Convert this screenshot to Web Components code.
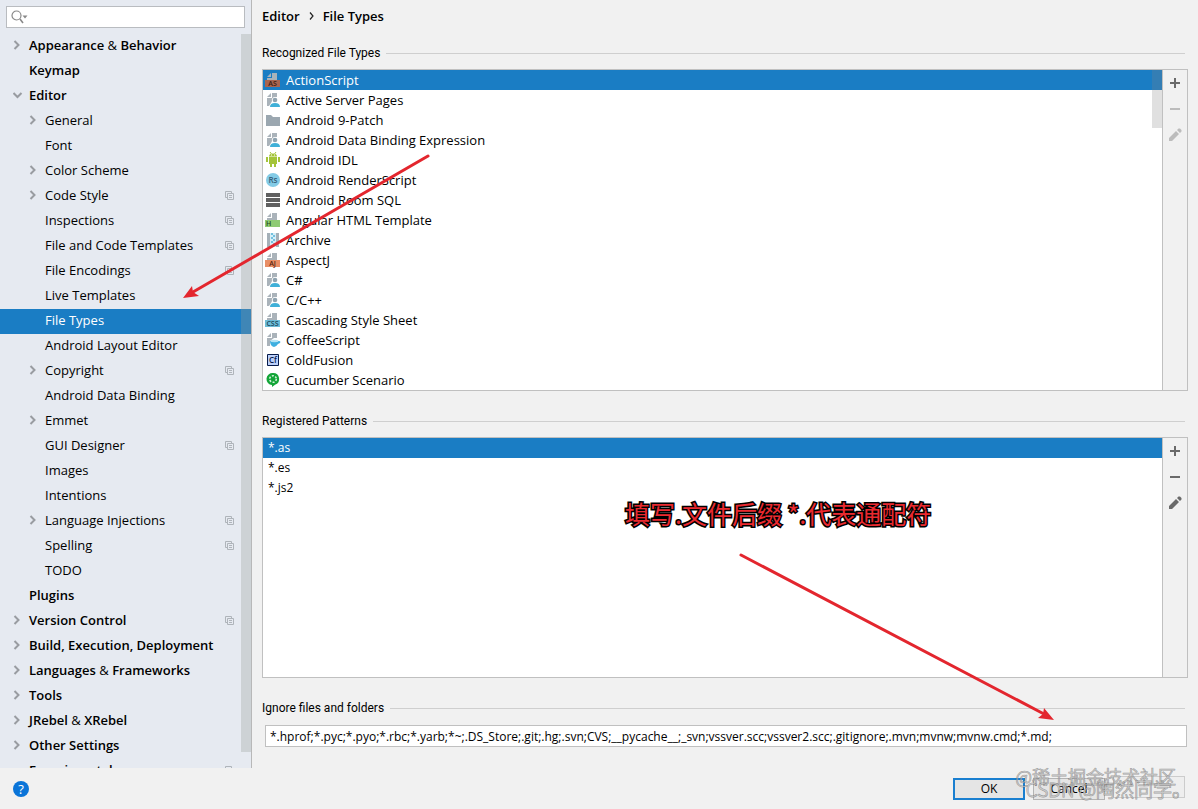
<!DOCTYPE html>
<html lang="en">
<head>
<meta charset="utf-8">
<title>Settings</title>
<style>
html,body{margin:0;height:100%}
body{font:13px/20px "Open Sans","Noto Sans","Noto Sans CJK SC",sans-serif;color:#000;background:#f1f1f1;overflow:hidden}
</style>
</head>
<body>
<settings-app></settings-app>
<script>
const define = (name, html, setup) => customElements.define(name, class extends HTMLElement {
  connectedCallback() {
    if (this.shadowRoot) return;
    const t = document.createElement('template');
    t.innerHTML = html;
    this.attachShadow({mode: 'open'}).append(t.content.cloneNode(true));
    if (setup) setup(this, this.shadowRoot);
  }
});

/* ---------- file type icons ---------- */
const page = '<path d="M7 1h5v7H2V6h5zM6 1v4H2z" fill="#aab3ba"/>';
const tag = (fill, text, ink, anchor) => page +
  `<rect x="0" y="8" width="15" height="7" fill="${fill}"/><text x="${anchor ? 7.5 : 1}" y="14" ${anchor ? 'text-anchor="middle"' : ''} font-family="Open Sans,sans-serif" font-size="7" font-weight="600" fill="${ink}">${text}</text>`;
const user = '<path d="M7 1h5v4h-2a3 3 0 0 0-3 4l-1 2-2 3H2V6h5zM6 1v4H2z" fill="#aab3ba"/><circle cx="10" cy="8" r="2.300" fill="#8fa3b0"/><path d="M5 15q0-4 5-4t5 4z" fill="#40b0d8"/>';
const icons = {
  as: tag('#a8644f', 'AS', '#3a1a10', true),
  user,
  folder: '<path d="M1 3h5l2 2h7v9H1z" fill="#9ba7b0"/>',
  android: '<path d="M4 5h8v7H4z M5 12h2v3H5z M9 12h2v3H9z M1 5h2v5H1z M13 5h2v5h-2z M4 4.500Q4 1.500 8 1.500T12 4.500z" fill="#a4c439"/><path d="M5 0l1.500 2M11 0L9.500 2" stroke="#a4c439"/><path d="M6 3h1M9 3h1" stroke="#fff"/>',
  rs: '<circle cx="8" cy="8" r="7" fill="#83cbe6"/><text x="8" y="11" text-anchor="middle" font-family="Open Sans,sans-serif" font-size="8" font-weight="600" fill="#37607a">Rs</text>',
  sql: '<path d="M1 1h14v4H1zM1 6h14v4H1zM1 11h14v4H1z" fill="#606060"/>',
  html: tag('#8ecb74', 'H', '#24451a'),
  archive: '<path d="M2 1h3v14H2zM11 1h3v14h-3z" fill="#a5b0b8"/><path d="M5 1h6v14H5z" fill="#d5eef8"/><path d="M6 2h2M8 4h2M6 6h2M8 8h2M6 10h2M8 12h2M6 14h2" stroke="#53b2d6" stroke-width="1.500"/>',
  aj: tag('#e88e66', 'AJ', '#56220c', true),
  css: tag('#6dbcd8', 'CSS', '#194456', true),
  coffee: '<path d="M7 1h5v5H9l-4 3v5H2V6h5zM6 1v4H2z" fill="#aab3ba"/><path d="M5 9h9q2 0 1 2l-2 1q-2 3-4 3-4-1-4-6z" fill="#3eafe0"/><ellipse cx="9.500" cy="9" rx="4" ry="1.200" fill="#b5e3f4"/>',
  cf: '<path d="M2.500 2.500h11v11h-11z" fill="#bcd0fa" stroke="#071b4b"/><text x="8" y="11" text-anchor="middle" font-family="Open Sans,sans-serif" font-size="8" font-weight="600" fill="#071b4b">Cf</text>',
  cucumber: '<path d="M8 1a6 6 0 0 1 2 11.700L7 15v-2A6 6 0 0 1 8 1z" fill="#13a538"/><circle cx="8" cy="7" r="3.300" fill="none" stroke="#d2f2d9" stroke-width="1.600" stroke-dasharray="2 1.500"/>'
};

/* ---------- tree row ---------- */
define('tree-item', `<style>
:host{display:flex;align-items:center;box-sizing:border-box;height:25px;flex:none;padding:0 17px 3px 13px;font-size:13px;white-space:nowrap}
:host([level="2"]){padding-left:29px}
:host([level="1"]){font-weight:600}
:host([selected]){background:#1a7dc4;color:#fff}
.chev{width:16px;height:10px;flex:none}
.chev svg{display:block}
.label{flex:1}
path{fill:none;stroke:#999ca1;stroke-width:2}
.copy path{stroke:#afb4ba;stroke-width:1}
</style><span class="chev"></span><span class="label"><slot></slot></span><span class="copy"></span>`, (el, root) => {
  el.setAttribute('role', 'treeitem');
  const kind = el.getAttribute('chevron');
  if (kind) root.querySelector('.chev').innerHTML = `<svg width="10" height="10"><path d="${kind === 'open' ? 'M0.500 3L4.500 7L8.500 3' : 'M1.500 1L5.500 5L1.500 9'}"/></svg>`;
  if (el.hasAttribute('copy')) root.querySelector('.copy').innerHTML = '<svg width="9" height="9" style="display:block"><path d="M2.500 6.500h-2v-6h6v2M2.500 2.500h6v6h-6zM4 4.500h3M4 6.500h3"/></svg>';
});

/* ---------- sidebar ---------- */
const rows = [
  ['1', 'closed', 'Appearance <i>&amp;</i> Behavior'], ['1', '', 'Keymap'], ['1', 'open', 'Editor'],
  ['2', 'closed', 'General'], ['2', '', 'Font'], ['2', 'closed', 'Color Scheme'],
  ['2', 'closed', 'Code Style', 'copy'], ['2', '', 'Inspections', 'copy'],
  ['2', '', 'File and Code Templates', 'copy'], ['2', '', 'File Encodings', 'copy'],
  ['2', '', 'Live Templates'], ['2', '', 'File Types', 'selected'], ['2', '', 'Android Layout Editor'],
  ['2', 'closed', 'Copyright', 'copy'], ['2', '', 'Android Data Binding'], ['2', 'closed', 'Emmet'],
  ['2', '', 'GUI Designer', 'copy'], ['2', '', 'Images'], ['2', '', 'Intentions'],
  ['2', 'closed', 'Language Injections', 'copy'], ['2', '', 'Spelling', 'copy'], ['2', '', 'TODO'],
  ['1', '', 'Plugins'], ['1', 'closed', 'Version Control', 'copy'],
  ['1', 'closed', 'Build, Execution, Deployment'], ['1', 'closed', 'Languages <i>&amp;</i> Frameworks'],
  ['1', 'closed', 'Tools'], ['1', 'closed', 'JRebel <i>&amp;</i> XRebel'], ['1', 'closed', 'Other Settings'],
  ['1', '', 'Experimental', 'copy']
];
define('settings-sidebar', `<style>
:host{display:flex;flex-direction:column;position:relative;background:#e6eaf1;border-right:1px solid #b8b8b8;overflow:hidden;min-height:0}
.search{display:flex;align-items:center;flex:none;height:20px;margin:6px;border:1px solid #b9bcc0;background:#fff}
.search svg{flex:none;margin-left:4px}
input{flex:1;min-width:0;border:0;outline:0;padding:0 4px;background:none;font:inherit}
.tree{display:flex;flex-direction:column;flex:1;min-height:0;overflow:hidden}
i{font-style:normal;font-weight:400}
.bar{position:absolute;right:0;top:34px;bottom:16px;width:10px;background:rgba(150,155,150,.3)}
</style>
<label class="search"><svg width="17" height="14" aria-hidden="true"><circle cx="5.500" cy="5.500" r="4.500" fill="none" stroke="#888" stroke-width="1.200"/><path d="M9 9l3 4" stroke="#888" stroke-width="1.500"/><path d="M11.500 5.500h5l-2.500 3z" fill="#888"/></svg><input type="text" aria-label="Search settings"></label>
<div class="tree" role="tree">${rows.map(([l, c, t, f]) => `<tree-item level="${l}"${c ? ` chevron="${c}"` : ''} ${f || ''}>${t}</tree-item>`).join('')}</div>
<div class="bar"></div>`);

/* ---------- section heading with rule ---------- */
define('section-title', `<style>
:host{display:flex;align-items:center;gap:6px;height:20px;flex:none;font-family:Roboto,sans-serif;font-size:12px;margin-right:3px}
hr{flex:1;border:0;border-top:1px solid #cfcfcf;margin:0}
</style><slot></slot><hr>`);

/* ---------- list row ---------- */
define('list-row', `<style>
:host{display:flex;align-items:center;height:20px;gap:5px;padding-left:2px;white-space:nowrap}
:host([plain]){padding-left:5px;font-size:12px;line-height:22px}
:host([selected]){background:#1a7dc4;color:#fff}
svg{flex:none}
</style><span><slot></slot></span>`, (el, root) => {
  el.setAttribute('role', 'option');
  const icon = icons[el.getAttribute('icon')];
  if (icon) root.querySelector('span').insertAdjacentHTML('beforebegin', `<svg width="16" height="16" aria-hidden="true">${icon}</svg>`);
});

/* ---------- toolbar button ---------- */
const glyphs = {
  Add: '<path d="M7 2v10M2 7h10" stroke="currentColor" stroke-width="2"/>',
  Remove: '<path d="M2 7h10" stroke="currentColor" stroke-width="2"/>',
  Edit: '<path d="M1 13v-3L8 3l3 3-7 7zM9 2l1.500-1.500h1.500l1.500 1.500v1.500L12 5z" fill="currentColor"/>'
};
define('tool-button', `<style>
:host{display:block;color:#6a6a6a}
:host([off]){color:#bcbcbc}
button{display:flex;align-items:center;justify-content:center;width:100%;height:26px;padding:0;border:0;background:none;color:inherit}
</style><button type="button"></button>`, (el, root) => {
  const b = root.querySelector('button'), n = el.getAttribute('name');
  b.setAttribute('aria-label', n);
  b.disabled = el.hasAttribute('off');
  b.innerHTML = `<svg width="14" height="14">${glyphs[n]}</svg>`;
});

/* ---------- list with side toolbar ---------- */
define('list-panel', `<style>
:host{display:grid;grid-template-columns:1fr 24px;border:1px solid #c0c0c0;min-height:0}
.list{background:#fff;border-right:1px solid #c0c0c0;position:relative}
.thumb{display:none}
:host([scroll]) .thumb{display:block;position:absolute;right:0;top:0;width:10px;height:58px;background:rgba(130,130,130,.25)}
</style><div class="list" role="listbox"><slot></slot><div class="thumb"></div></div><div><slot name="tools"></slot></div>`);

/* ---------- dialog button ---------- */
define('dialog-button', `<style>
:host{display:block}
button{box-sizing:border-box;width:72px;height:22px;padding:0;border:1px solid #b4b4b4;background:#e5e5e5;font:inherit;font-size:12px;line-height:20px;color:#000}
:host([primary]) button{border:2px solid #1a7fd0;line-height:18px}
:host([off]) button{border-color:#cccccc;background:#eeeeee}
</style><button type="button"><slot></slot></button>`, (el, root) => {
  if (el.hasAttribute('off')) { const b = root.querySelector('button'); b.disabled = true; b.setAttribute('aria-label', 'Apply'); }
});

/* ---------- arrows, note and watermarks over the dialog ---------- */
define('page-notes', `<style>
:host{position:absolute;inset:0;pointer-events:none;overflow:hidden;white-space:nowrap;font-family:"Noto Sans CJK SC",sans-serif}
svg{position:absolute;left:0;top:0}
.note{position:absolute;left:625px;top:495px;font-size:25px;line-height:36px;font-weight:400;color:#ea2a30;-webkit-text-stroke:3px #000;paint-order:stroke fill}
.mark{position:absolute;line-height:26px;font-weight:300;color:rgba(240,240,240,.5);-webkit-text-stroke:1px rgba(100,100,100,.6);paint-order:stroke fill}
.one{right:22px;bottom:20px;font-size:18px}
.two{right:7px;bottom:7px;font-size:19px}
</style>
<svg width="1198" height="809" aria-hidden="true">
<g stroke="#e3262e" stroke-width="3" stroke-linecap="round"><path d="M428 156L193 292M741 555L1044 714"/></g>
<g fill="#e3262e"><path d="M183 298L192 286L193 292L199 296z"/><path d="M1054 720L1038 718L1043 714L1044 708z"/></g></svg>
<div class="note">填写.文件后缀 *.代表通配符</div>
<div class="mark one">@稀土掘金技术社区</div>
<div class="mark two">CSDN @陶然同学。</div>`);

/* ---------- whole dialog ---------- */
const types = [['as','ActionScript'],['user','Active Server Pages'],['folder','Android 9-Patch'],['user','Android Data Binding Expression'],['android','Android IDL'],['rs','Android RenderScript'],['sql','Android Room SQL'],['html','Angular HTML Template'],['archive','Archive'],['aj','AspectJ'],['user','C#'],['user','C/C++'],['css','Cascading Style Sheet'],['coffee','CoffeeScript'],['cf','ColdFusion'],['cucumber','Cucumber Scenario']];
define('settings-app', `<style>
:host{display:grid;grid-template:minmax(0,1fr) 41px / 252px minmax(0,1fr);height:100vh;position:relative}
main{display:flex;flex-direction:column;padding:6px 10px 21px;min-height:0}
h1{display:flex;gap:9px;margin:0 0 17px;font-size:13px;line-height:20px;font-weight:600}
h1 svg{align-self:center}
.types{flex:none;margin:6px 0 20px}
.patterns{flex:1;margin:6px 0 20px}
input{flex:none;box-sizing:border-box;height:22px;margin:7px 1px 0 3px;border:1px solid #c0c0c0;border-radius:0;outline:0;padding:0 4px;background:#fff;color:#000;font:inherit;font-size:12px}
footer{grid-column:1/-1;display:flex;align-items:center;gap:8px;padding:0 13px}
.help{width:16px;height:16px;margin-right:auto;padding:0;border:0;border-radius:50%;background:#0a74d8;color:#fff;font:inherit;font-size:13px;line-height:16px}
</style>
<settings-sidebar></settings-sidebar>
<main>
<h1><span>Editor</span><svg width="5" height="8" aria-hidden="true"><path d="M1 0.500L4 4L1 7.500" fill="none" stroke="#222" stroke-width="1.200"/></svg><span>File Types</span></h1>
<section-title>Recognized File Types</section-title>
<list-panel class="types" scroll>
${types.map(([i, t], n) => `<list-row icon="${i}"${n ? '' : ' selected'}>${t}</list-row>`).join('')}
<tool-button slot="tools" name="Add"></tool-button><tool-button slot="tools" name="Remove" off></tool-button><tool-button slot="tools" name="Edit" off></tool-button>
</list-panel>
<section-title>Registered Patterns</section-title>
<list-panel class="patterns">
<list-row plain selected>*.as</list-row><list-row plain>*.es</list-row><list-row plain>*.js2</list-row>
<tool-button slot="tools" name="Add"></tool-button><tool-button slot="tools" name="Remove"></tool-button><tool-button slot="tools" name="Edit"></tool-button>
</list-panel>
<section-title>Ignore files and folders</section-title>
<input type="text" aria-label="Ignore files and folders" value="*.hprof;*.pyc;*.pyo;*.rbc;*.yarb;*~;.DS_Store;.git;.hg;.svn;CVS;__pycache__;_svn;vssver.scc;vssver2.scc;.gitignore;.mvn;mvnw;mvnw.cmd;*.md;">
</main>
<footer><button class="help" type="button" aria-label="Help">?</button><dialog-button primary>OK</dialog-button><dialog-button>Cancel</dialog-button><dialog-button off></dialog-button></footer>
<page-notes></page-notes>`);
</script>
</body>
</html>
